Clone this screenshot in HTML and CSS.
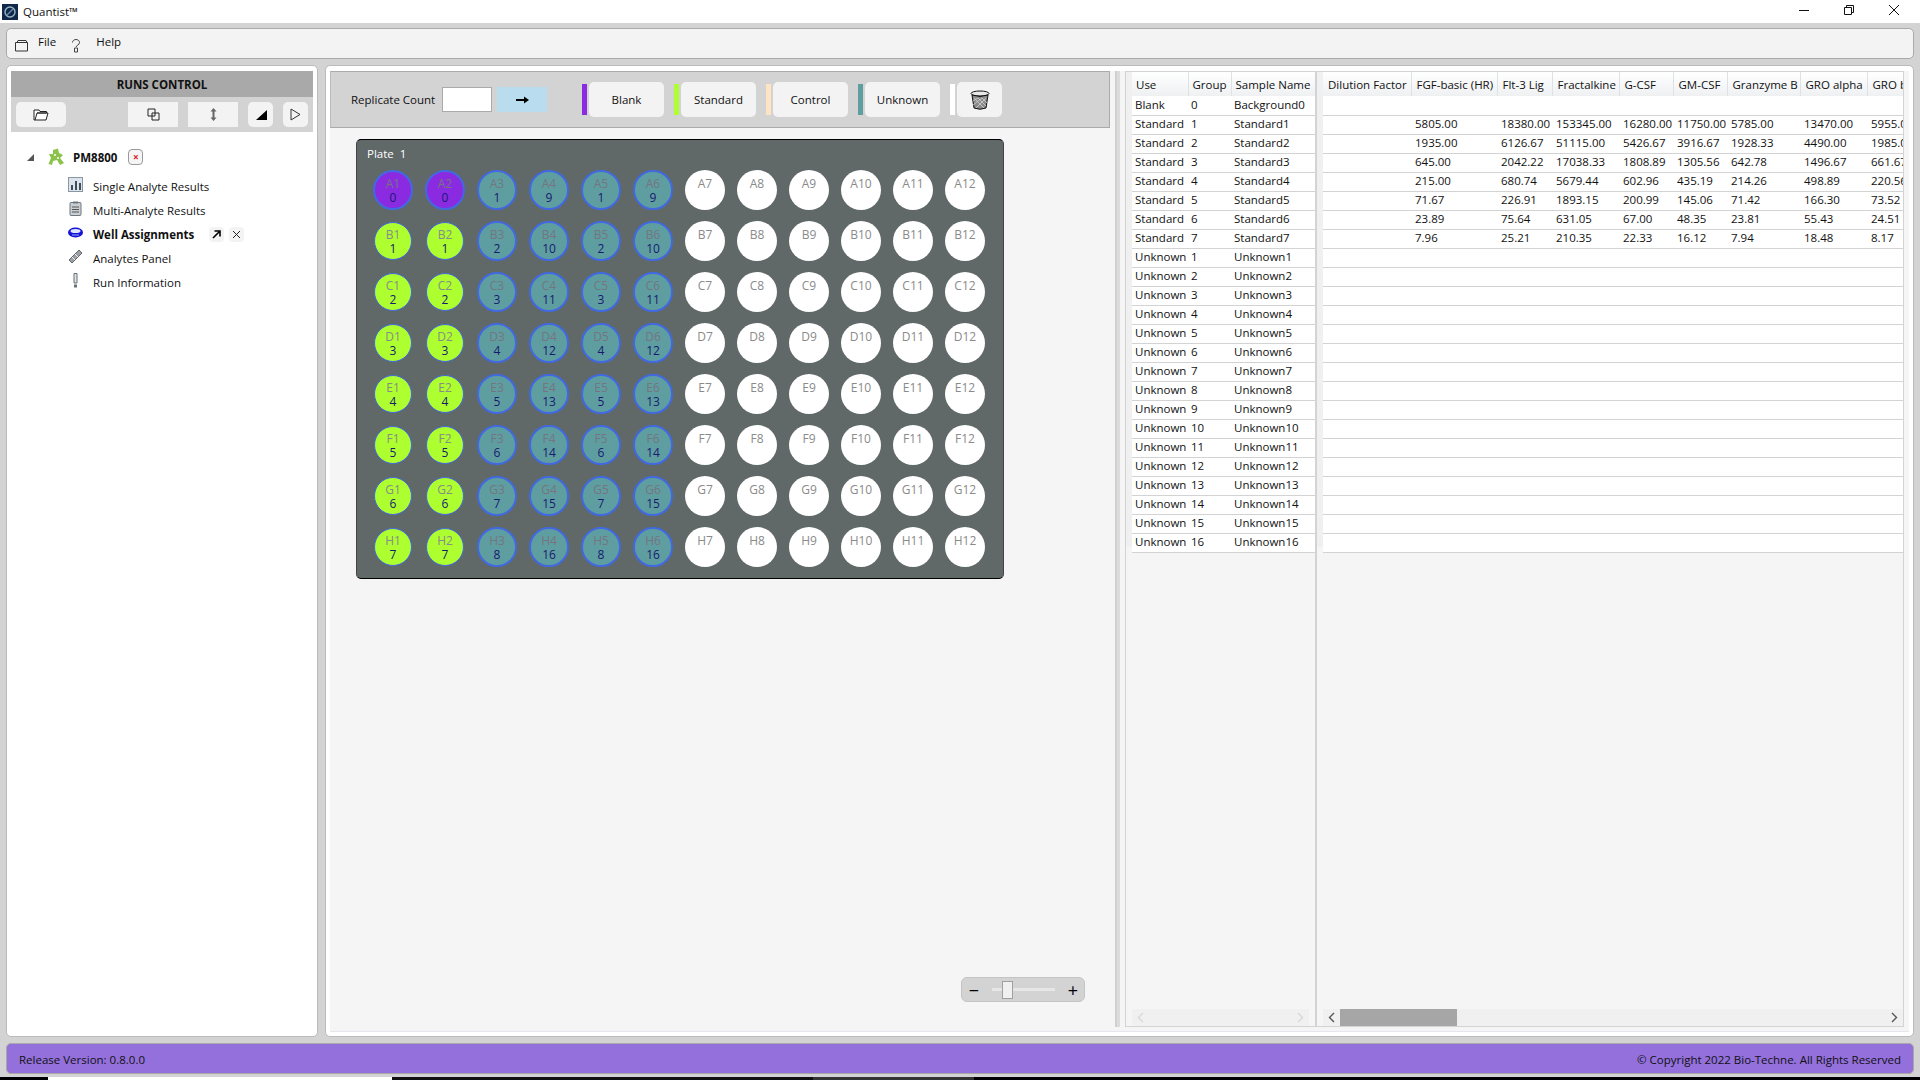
FILE: index.html
```html
<!DOCTYPE html>
<html lang="en">
<head>
    <meta charset="UTF-8">
    <title>Quantist</title>
    <link rel="stylesheet" href="styles.css">
</head>
<body>
    <!-- Title bar -->
    <div class="titlebar">
        <svg class="app-logo" width="16" height="16" viewBox="0 0 16 16">
            <rect width="16" height="16" fill="#10294a"/>
            <circle cx="8" cy="8" r="5" fill="none" stroke="#9db4c6" stroke-width="1.4"/>
            <path d="M5 11 L11 5" stroke="#5f8aa8" stroke-width="1.4"/>
        </svg>
        <span class="app-name">Quantist™</span>
        <div class="window-btns">
            <svg width="12" height="12" viewBox="0 0 12 12"><path d="M1 6.5 H11" stroke="#111" fill="none"/></svg>
            <svg width="12" height="12" viewBox="0 0 12 12"><path d="M1.5 3.5 H8.5 V10.5 H1.5 Z M3.5 3.5 V1.5 H10.5 V8.5 H8.5" stroke="#111" fill="none"/></svg>
            <svg width="12" height="12" viewBox="0 0 12 12"><path d="M1 1 L11 11 M11 1 L1 11" stroke="#111" fill="none"/></svg>
        </div>
    </div>

    <!-- Menu -->
    <div class="menubar">
        <svg class="menu-icon-file" width="15" height="13" viewBox="0 0 15 13"><path d="M1.5 3.5 H13.5 V12 H1.5 Z M3 3.5 L4 1.5 H12 L13 3.5" fill="#f3f3f3" stroke="#333"/></svg>
        <span class="menu-file">File</span>
        <svg class="menu-icon-help" width="10" height="15" viewBox="0 0 10 15"><path d="M1.5 4.5 C1.5 0.5 8.5 0.5 8.5 4.5 C8.5 7 5.5 7 5 9 M3.5 10 H6.5 V14 H3.5 Z" fill="none" stroke="#444"/></svg>
        <span class="menu-help">Help</span>
    </div>

    <div class="main">
        <!-- Left panel -->
        <div class="runs">
            <div class="runs-title">RUNS CONTROL</div>
            <div class="runs-tools">
                <button class="tool tool-wide">
                    <svg width="16" height="12" viewBox="0 0 16 12"><path d="M1 1 H6 L7 2.5 H13.5 V4 H4 L2 11 H1 Z M4 4 H15 L13 11 H2" fill="#fff" stroke="#222"/></svg>
                </button>
                <button class="tool tool-square tool-copy">
                    <svg width="13" height="13" viewBox="0 0 13 13"><path d="M1 1 H8 V8 H1 Z M5 5 H12 V12 H5 Z" fill="none" stroke="#222"/></svg>
                </button>
                <button class="tool tool-square">
                    <svg width="7" height="13" viewBox="0 0 7 13"><path d="M3.5 0 L6.5 3.5 H4.5 V9.5 H6.5 L3.5 13 L0.5 9.5 H2.5 V3.5 H0.5 Z" fill="#666"/></svg>
                </button>
                <button class="tool tool-small">
                    <svg width="12" height="12" viewBox="0 0 12 12"><path d="M12 1 V11 H1 Z" fill="#000"/></svg>
                </button>
                <button class="tool tool-small">
                    <svg width="11" height="13" viewBox="0 0 11 13"><path d="M1 1 L10 6.5 L1 12 Z" fill="none" stroke="#333"/></svg>
                </button>
            </div>
            <div class="tree">
                <div class="tree-root">
                    <svg class="tree-arrow" width="7" height="7" viewBox="0 0 7 7"><path d="M7 0 V7 H0 Z" fill="#555"/></svg>
                    <svg class="tree-root-icon" width="17" height="18" viewBox="0 0 17 18">
                        <path d="M5 2 L10 0.5 L11 5 L15 7 L12 10 L16 15 L12 17 L9 12 L5 13 L4 17 L0.5 16 L3 10 L1 6 L5 6 Z" fill="#8bc34a"/>
                        <circle cx="7" cy="7" r="1" fill="#fff"/><circle cx="10" cy="10" r="1" fill="#fff"/>
                    </svg>
                    <span class="tree-root-name">PM8800</span>
                    <span class="close-red">×</span>
                </div>
                <div class="tree-item">
                    <svg width="15" height="15" viewBox="0 0 15 15"><rect x="0.5" y="0.5" width="14" height="14" fill="#dbe4ec" stroke="#8a97a3"/><path d="M3 13 V8 H5 V13 Z M7 13 V4 H9 V13 Z M11 13 V6 H13 V13 Z" fill="#3d4d5c"/></svg>
                    <span>Single Analyte Results</span>
                </div>
                <div class="tree-item">
                    <svg width="15" height="15" viewBox="0 0 15 15"><rect x="2" y="1.5" width="11" height="13" rx="1" fill="#c9ced3" stroke="#6f7880"/><rect x="5" y="0.5" width="5" height="2" fill="#6f7880"/><path d="M4 6 H11 M4 8.5 H11 M4 11 H11" stroke="#555"/></svg>
                    <span>Multi-Analyte Results</span>
                </div>
                <div class="tree-item tree-item-active">
                    <svg width="15" height="11" viewBox="0 0 15 11"><ellipse cx="7.5" cy="5.5" rx="7.5" ry="5" fill="#1414d2"/><ellipse cx="7.5" cy="4" rx="5" ry="2" fill="#dfe6ff"/><path d="M4 8 H11" stroke="#9aa8ff"/></svg>
                    <span>Well Assignments</span>
                    <span class="item-btn item-btn-pop"><svg width="9" height="9" viewBox="0 0 9 9"><path d="M1 8 L7 2 M2.5 1 H8 V6.5" fill="none" stroke="#000" stroke-width="1.6"/></svg></span>
                    <span class="item-btn"><svg width="9" height="9" viewBox="0 0 9 9"><path d="M1 1 L8 8 M8 1 L1 8" stroke="#222" fill="none"/></svg></span>
                </div>
                <div class="tree-item">
                    <svg width="15" height="15" viewBox="0 0 15 15"><path d="M1 11 L11 1 L14 4 L4 14 Z" fill="#9aa0a6" stroke="#666"/><path d="M4 8 L7 11 M7 5 L10 8" stroke="#eee"/></svg>
                    <span>Analytes Panel</span>
                </div>
                <div class="tree-item">
                    <svg width="15" height="15" viewBox="0 0 15 15"><path d="M6 0.5 H9 V10 H6 Z" fill="#dfe3e6" stroke="#66717a"/><rect x="6" y="11.5" width="3" height="3" fill="#66717a"/></svg>
                    <span>Run Information</span>
                </div>
            </div>
        </div>

        <!-- Right panel -->
        <div class="work">
            <div class="work-inner">
                <div class="assign">
                    <div class="assign-tools">
                        <label class="rep-label">Replicate Count</label>
                        <input class="rep-input" type="text">
                        <button class="rep-go">
                            <svg width="13" height="8" viewBox="0 0 13 8"><path d="M0 4 H9" stroke="#000" stroke-width="2"/><path d="M8 0.5 L13 4 L8 7.5 Z" fill="#000"/></svg>
                        </button>
                        <span class="swatch swatch-blank swatch-first"></span><button class="use-btn">Blank</button>
                        <span class="swatch swatch-standard"></span><button class="use-btn">Standard</button>
                        <span class="swatch swatch-control"></span><button class="use-btn">Control</button>
                        <span class="swatch swatch-unknown"></span><button class="use-btn">Unknown</button>
                        <span class="swatch swatch-empty"></span><button class="use-btn use-btn-bin">
                            <svg width="20" height="20" viewBox="0 0 20 20">
                                <ellipse cx="10" cy="3.5" rx="9" ry="2.5" fill="#e8e8e8" stroke="#111"/>
                                <path d="M2 5 L4 18 Q10 20.5 16 18 L18 5 Q10 8 2 5 Z" fill="#8a8a8a" stroke="#111"/>
                                <path d="M4 8 L14 18 M8 8 L16 16 M12 8 L17 13 M16 8 L6 18 M12 8 L3 15 M8 8 L3 11" stroke="#ddd" stroke-width="0.7"/>
                            </svg>
                        </button>
                    </div>

                    <div class="plate">
                        <div class="plate-title">Plate&nbsp; 1</div>
                        <div class="wells">
                            <div class="well well-blank"><span>A1</span><b>0</b></div>
                            <div class="well well-blank"><span>A2</span><b>0</b></div>
                            <div class="well well-unknown"><span>A3</span><b>1</b></div>
                            <div class="well well-unknown"><span>A4</span><b>9</b></div>
                            <div class="well well-unknown"><span>A5</span><b>1</b></div>
                            <div class="well well-unknown"><span>A6</span><b>9</b></div>
                            <div class="well"><span>A7</span></div>
                            <div class="well"><span>A8</span></div>
                            <div class="well"><span>A9</span></div>
                            <div class="well"><span>A10</span></div>
                            <div class="well"><span>A11</span></div>
                            <div class="well"><span>A12</span></div>

                            <div class="well well-standard"><span>B1</span><b>1</b></div>
                            <div class="well well-standard"><span>B2</span><b>1</b></div>
                            <div class="well well-unknown"><span>B3</span><b>2</b></div>
                            <div class="well well-unknown"><span>B4</span><b>10</b></div>
                            <div class="well well-unknown"><span>B5</span><b>2</b></div>
                            <div class="well well-unknown"><span>B6</span><b>10</b></div>
                            <div class="well"><span>B7</span></div>
                            <div class="well"><span>B8</span></div>
                            <div class="well"><span>B9</span></div>
                            <div class="well"><span>B10</span></div>
                            <div class="well"><span>B11</span></div>
                            <div class="well"><span>B12</span></div>

                            <div class="well well-standard"><span>C1</span><b>2</b></div>
                            <div class="well well-standard"><span>C2</span><b>2</b></div>
                            <div class="well well-unknown"><span>C3</span><b>3</b></div>
                            <div class="well well-unknown"><span>C4</span><b>11</b></div>
                            <div class="well well-unknown"><span>C5</span><b>3</b></div>
                            <div class="well well-unknown"><span>C6</span><b>11</b></div>
                            <div class="well"><span>C7</span></div>
                            <div class="well"><span>C8</span></div>
                            <div class="well"><span>C9</span></div>
                            <div class="well"><span>C10</span></div>
                            <div class="well"><span>C11</span></div>
                            <div class="well"><span>C12</span></div>

                            <div class="well well-standard"><span>D1</span><b>3</b></div>
                            <div class="well well-standard"><span>D2</span><b>3</b></div>
                            <div class="well well-unknown"><span>D3</span><b>4</b></div>
                            <div class="well well-unknown"><span>D4</span><b>12</b></div>
                            <div class="well well-unknown"><span>D5</span><b>4</b></div>
                            <div class="well well-unknown"><span>D6</span><b>12</b></div>
                            <div class="well"><span>D7</span></div>
                            <div class="well"><span>D8</span></div>
                            <div class="well"><span>D9</span></div>
                            <div class="well"><span>D10</span></div>
                            <div class="well"><span>D11</span></div>
                            <div class="well"><span>D12</span></div>

                            <div class="well well-standard"><span>E1</span><b>4</b></div>
                            <div class="well well-standard"><span>E2</span><b>4</b></div>
                            <div class="well well-unknown"><span>E3</span><b>5</b></div>
                            <div class="well well-unknown"><span>E4</span><b>13</b></div>
                            <div class="well well-unknown"><span>E5</span><b>5</b></div>
                            <div class="well well-unknown"><span>E6</span><b>13</b></div>
                            <div class="well"><span>E7</span></div>
                            <div class="well"><span>E8</span></div>
                            <div class="well"><span>E9</span></div>
                            <div class="well"><span>E10</span></div>
                            <div class="well"><span>E11</span></div>
                            <div class="well"><span>E12</span></div>

                            <div class="well well-standard"><span>F1</span><b>5</b></div>
                            <div class="well well-standard"><span>F2</span><b>5</b></div>
                            <div class="well well-unknown"><span>F3</span><b>6</b></div>
                            <div class="well well-unknown"><span>F4</span><b>14</b></div>
                            <div class="well well-unknown"><span>F5</span><b>6</b></div>
                            <div class="well well-unknown"><span>F6</span><b>14</b></div>
                            <div class="well"><span>F7</span></div>
                            <div class="well"><span>F8</span></div>
                            <div class="well"><span>F9</span></div>
                            <div class="well"><span>F10</span></div>
                            <div class="well"><span>F11</span></div>
                            <div class="well"><span>F12</span></div>

                            <div class="well well-standard"><span>G1</span><b>6</b></div>
                            <div class="well well-standard"><span>G2</span><b>6</b></div>
                            <div class="well well-unknown"><span>G3</span><b>7</b></div>
                            <div class="well well-unknown"><span>G4</span><b>15</b></div>
                            <div class="well well-unknown"><span>G5</span><b>7</b></div>
                            <div class="well well-unknown"><span>G6</span><b>15</b></div>
                            <div class="well"><span>G7</span></div>
                            <div class="well"><span>G8</span></div>
                            <div class="well"><span>G9</span></div>
                            <div class="well"><span>G10</span></div>
                            <div class="well"><span>G11</span></div>
                            <div class="well"><span>G12</span></div>

                            <div class="well well-standard"><span>H1</span><b>7</b></div>
                            <div class="well well-standard"><span>H2</span><b>7</b></div>
                            <div class="well well-unknown"><span>H3</span><b>8</b></div>
                            <div class="well well-unknown"><span>H4</span><b>16</b></div>
                            <div class="well well-unknown"><span>H5</span><b>8</b></div>
                            <div class="well well-unknown"><span>H6</span><b>16</b></div>
                            <div class="well"><span>H7</span></div>
                            <div class="well"><span>H8</span></div>
                            <div class="well"><span>H9</span></div>
                            <div class="well"><span>H10</span></div>
                            <div class="well"><span>H11</span></div>
                            <div class="well"><span>H12</span></div>
                        </div>
                    </div>

                    <div class="zoom-slider">
                        <span class="zoom-sign">−</span>
                        <span class="zoom-track"><span class="zoom-thumb"></span></span>
                        <span class="zoom-sign">+</span>
                    </div>
                </div>

                <div class="splitter"></div>

                <!-- Sample tables -->
                <div class="tables">
                    <div class="pane pane-left">
                        <div class="pane-body">
                            <table class="grid grid-left">
                                <colgroup><col class="c-use"><col class="c-group"><col class="c-name"></colgroup>
                                <thead><tr><th>Use</th><th>Group</th><th>Sample Name</th></tr></thead>
                                <tbody>
                                    <tr><td>Blank</td><td>0</td><td>Background0</td></tr>
                                    <tr><td>Standard</td><td>1</td><td>Standard1</td></tr>
                                    <tr><td>Standard</td><td>2</td><td>Standard2</td></tr>
                                    <tr><td>Standard</td><td>3</td><td>Standard3</td></tr>
                                    <tr><td>Standard</td><td>4</td><td>Standard4</td></tr>
                                    <tr><td>Standard</td><td>5</td><td>Standard5</td></tr>
                                    <tr><td>Standard</td><td>6</td><td>Standard6</td></tr>
                                    <tr><td>Standard</td><td>7</td><td>Standard7</td></tr>
                                    <tr><td>Unknown</td><td>1</td><td>Unknown1</td></tr>
                                    <tr><td>Unknown</td><td>2</td><td>Unknown2</td></tr>
                                    <tr><td>Unknown</td><td>3</td><td>Unknown3</td></tr>
                                    <tr><td>Unknown</td><td>4</td><td>Unknown4</td></tr>
                                    <tr><td>Unknown</td><td>5</td><td>Unknown5</td></tr>
                                    <tr><td>Unknown</td><td>6</td><td>Unknown6</td></tr>
                                    <tr><td>Unknown</td><td>7</td><td>Unknown7</td></tr>
                                    <tr><td>Unknown</td><td>8</td><td>Unknown8</td></tr>
                                    <tr><td>Unknown</td><td>9</td><td>Unknown9</td></tr>
                                    <tr><td>Unknown</td><td>10</td><td>Unknown10</td></tr>
                                    <tr><td>Unknown</td><td>11</td><td>Unknown11</td></tr>
                                    <tr><td>Unknown</td><td>12</td><td>Unknown12</td></tr>
                                    <tr><td>Unknown</td><td>13</td><td>Unknown13</td></tr>
                                    <tr><td>Unknown</td><td>14</td><td>Unknown14</td></tr>
                                    <tr><td>Unknown</td><td>15</td><td>Unknown15</td></tr>
                                    <tr><td>Unknown</td><td>16</td><td>Unknown16</td></tr>
                                </tbody>
                            </table>
                        </div>
                        <div class="hscroll hscroll-off">
                            <svg width="7" height="11" viewBox="0 0 7 11"><path d="M6 1 L1.5 5.5 L6 10" fill="none" stroke="#d8d8d8" stroke-width="1.4"/></svg>
                            <svg width="7" height="11" viewBox="0 0 7 11"><path d="M1 1 L5.5 5.5 L1 10" fill="none" stroke="#d8d8d8" stroke-width="1.4"/></svg>
                        </div>
                    </div>

                    <div class="pane pane-right">
                        <div class="pane-body">
                            <table class="grid grid-right">
                                <colgroup><col class="c-dil"><col class="c-fgf"><col class="c-flt"><col class="c-fra"><col class="c-g"><col class="c-gm"><col class="c-gra"><col class="c-gro"><col class="c-grob"></colgroup>
                                <thead><tr><th>Dilution Factor</th><th>FGF-basic (HR)</th><th>Flt-3 Lig</th><th>Fractalkine</th><th>G-CSF</th><th>GM-CSF</th><th>Granzyme B</th><th>GRO alpha</th><th>GRO beta</th></tr></thead>
                                <tbody>
                                    <tr><td colspan="9"></td></tr>
                                    <tr><td></td><td>5805.00</td><td>18380.00</td><td>153345.00</td><td>16280.00</td><td>11750.00</td><td>5785.00</td><td>13470.00</td><td>5955.00</td></tr>
                                    <tr><td></td><td>1935.00</td><td>6126.67</td><td>51115.00</td><td>5426.67</td><td>3916.67</td><td>1928.33</td><td>4490.00</td><td>1985.00</td></tr>
                                    <tr><td></td><td>645.00</td><td>2042.22</td><td>17038.33</td><td>1808.89</td><td>1305.56</td><td>642.78</td><td>1496.67</td><td>661.67</td></tr>
                                    <tr><td></td><td>215.00</td><td>680.74</td><td>5679.44</td><td>602.96</td><td>435.19</td><td>214.26</td><td>498.89</td><td>220.56</td></tr>
                                    <tr><td></td><td>71.67</td><td>226.91</td><td>1893.15</td><td>200.99</td><td>145.06</td><td>71.42</td><td>166.30</td><td>73.52</td></tr>
                                    <tr><td></td><td>23.89</td><td>75.64</td><td>631.05</td><td>67.00</td><td>48.35</td><td>23.81</td><td>55.43</td><td>24.51</td></tr>
                                    <tr><td></td><td>7.96</td><td>25.21</td><td>210.35</td><td>22.33</td><td>16.12</td><td>7.94</td><td>18.48</td><td>8.17</td></tr>
                                    <tr><td colspan="9"></td></tr>
                                    <tr><td colspan="9"></td></tr>
                                    <tr><td colspan="9"></td></tr>
                                    <tr><td colspan="9"></td></tr>
                                    <tr><td colspan="9"></td></tr>
                                    <tr><td colspan="9"></td></tr>
                                    <tr><td colspan="9"></td></tr>
                                    <tr><td colspan="9"></td></tr>
                                    <tr><td colspan="9"></td></tr>
                                    <tr><td colspan="9"></td></tr>
                                    <tr><td colspan="9"></td></tr>
                                    <tr><td colspan="9"></td></tr>
                                    <tr><td colspan="9"></td></tr>
                                    <tr><td colspan="9"></td></tr>
                                    <tr><td colspan="9"></td></tr>
                                    <tr><td colspan="9"></td></tr>
                                </tbody>
                            </table>
                        </div>
                        <div class="hscroll hscroll-on">
                            <svg width="7" height="11" viewBox="0 0 7 11"><path d="M6 1 L1.5 5.5 L6 10" fill="none" stroke="#555" stroke-width="1.4"/></svg>
                            <span class="hscroll-thumb"></span>
                            <svg class="hscroll-end" width="7" height="11" viewBox="0 0 7 11"><path d="M1 1 L5.5 5.5 L1 10" fill="none" stroke="#555" stroke-width="1.4"/></svg>
                        </div>
                    </div>
                </div>
            </div>
        </div>
    </div>

    <div class="statusbar">
        <span>Release Version: 0.8.0.0</span>
        <span>© Copyright 2022 Bio-Techne. All Rights Reserved</span>
    </div>

    <div class="taskstrip"><span class="strip-start"></span><span class="strip-white"></span><span class="strip-black"></span><span class="strip-gray"></span></div>
</body>
</html>
```

FILE: styles.css
```css
* {
    box-sizing: border-box;
}

html, body {
    height: 100%;
}

body {
    margin: 0;
    height: 1080px;
    overflow: hidden;
    display: flex;
    flex-direction: column;
    background-color: #d3d3d3;
    font-family: "Open Sans", "Noto Sans", sans-serif;
    font-size: 11.5px;
    color: #111;
}

button {
    font: inherit;
    color: inherit;
    border: none;
    padding: 0;
    display: flex;
    align-items: center;
    justify-content: center;
}

/* Title bar */
.titlebar {
    height: 23px;
    flex: none;
    display: flex;
    align-items: center;
    background-color: #ffffff;
    padding-left: 2px;
}

.app-name {
    margin-left: 5px;
}

.window-btns {
    margin: -3px 0 0 auto;
    display: flex;
    gap: 33px;
    padding-right: 20px;
}

/* Menu */
.menubar {
    flex: none;
    height: 31px;
    margin: 5px 6px 6px;
    display: flex;
    align-items: center;
    background-color: #f3f3f3;
    border: 1px solid #aaaaaa;
    border-radius: 5px;
}

.menu-icon-file {
    margin: 4px 0 0 7px;
}

.menu-file {
    margin: -5px 0 0 9px;
}

.menu-icon-help {
    margin: 4px 0 0 15px;
}

.menu-help {
    margin: -5px 0 0 15px;
}

/* Panels */
.main {
    flex: none;
    height: 972px;
    margin: 0 6px 0;
    display: flex;
    gap: 7px;
}

.runs {
    width: 312px;
    flex: none;
    background-color: #ffffff;
    border: 1px solid #bbbbbb;
    border-radius: 5px;
    padding: 5px 4px 4px;
}

.runs-title {
    height: 26px;
    display: flex;
    align-items: center;
    justify-content: center;
    background-color: #a9a9a9;
    font-weight: 700;
}

.runs-tools {
    height: 35px;
    display: flex;
    align-items: center;
    background-color: #d3d3d3;
    padding-left: 5px;
}

.tool {
    height: 25px;
    flex: none;
    background-color: #f3f3f3;
}

.tool-wide {
    width: 50px;
    border-radius: 5px;
    margin-right: 62px;
}

.tool-square {
    width: 50px;
    margin-right: 10px;
}

.tool-small {
    width: 25px;
    border-radius: 5px;
    margin-right: 10px;
}

.tree {
    padding-top: 16px;
}

.tree-root {
    height: 18px;
    display: flex;
    align-items: center;
    margin-bottom: 8px;
    padding-left: 16px;
}

.tree-root-icon {
    margin-left: 14px;
}

.tree-root-name {
    margin-left: 8px;
    font-weight: 700;
}

.close-red {
    width: 15px;
    height: 16px;
    margin-left: 11px;
    display: flex;
    align-items: center;
    justify-content: center;
    border: 1px solid #999999;
    border-radius: 4px;
    background-color: #f5f5f5;
    color: #e02020;
    font-weight: 700;
    font-size: 10px;
}

.tree-item {
    height: 24px;
    display: flex;
    align-items: center;
    padding-left: 57px;
}

.tree-item svg {
    flex: none;
}

.tree-item > svg {
    margin-top: -3px;
}

.tree-item > span:first-of-type {
    margin-left: 10px;
}

.tree-item-active {
    font-weight: 700;
}

.item-btn {
    width: 15px;
    height: 15px;
    margin-left: 5px;
    display: flex;
    align-items: center;
    justify-content: center;
    background-color: #f3f3f3;
    border-radius: 4px;
}

.item-btn-pop {
    margin-left: 15px;
}

.work {
    flex: 1;
    background-color: #ffffff;
    border: 1px solid #bbbbbb;
    border-radius: 5px;
    padding: 5px 4px 4px;
    min-width: 0;
}

.work-inner {
    height: 100%;
    display: flex;
    background-color: #f5f5f5;
    border-bottom: 1px solid #e6e6ee;
    padding-bottom: 4px;
}

/* Well assignment side */
.assign {
    width: 780px;
    flex: none;
    display: flex;
    flex-direction: column;
}

.assign-tools {
    height: 57px;
    flex: none;
    display: flex;
    align-items: center;
    background-color: #d3d3d3;
    border: 1px solid #aaaaaa;
    border-left: 1px solid #bbbbbb;
    padding-left: 20px;
}

.rep-label {
    width: 91px;
    white-space: nowrap;
}

.rep-input {
    width: 50px;
    height: 25px;
    background-color: #ffffff;
    border: 1px solid #aaaaaa;
}

.rep-go {
    width: 50px;
    height: 25px;
    margin-left: 5px;
    background-color: #b9dcee;
}

.swatch {
    width: 5px;
    height: 31px;
    margin-left: 10px;
}

.swatch-first {
    margin-left: 35px;
}

.swatch-blank {
    background-color: #8a2be2;
}

.swatch-standard {
    background-color: #adff2f;
}

.swatch-control {
    background-color: #ffe4c4;
}

.swatch-unknown {
    background-color: #5f9ea0;
}

.swatch-empty {
    background-color: #ffffff;
}

.use-btn {
    width: 75px;
    height: 35px;
    margin-left: 2px;
    background-color: #f3f3f3;
    border-radius: 5px;
}

.use-btn-bin {
    width: 45px;
}

.plate {
    width: 648px;
    height: 440px;
    flex: none;
    margin: 11px 0 0 26px;
    background-color: #606868;
    border-top: 1px solid #000000;
    border-left: 1px solid #444444;
    border-right: 1px solid #444444;
    border-bottom: 1px solid #000000;
    border-radius: 5px;
    padding: 5px 0 0 16px;
}

.plate-title {
    height: 25px;
    color: #ffffff;
    line-height: 17px;
    margin-left: -6px;
}

.wells {
    display: grid;
    grid-template-columns: repeat(12, 40px);
    grid-auto-rows: 40px;
    column-gap: 12px;
    row-gap: 11px;
}

.well {
    width: 40px;
    height: 40px;
    border-radius: 50%;
    background-color: #ffffff;
    display: flex;
    flex-direction: column;
    align-items: center;
    padding-top: 7px;
    font-size: 12px;
    line-height: 14px;
    color: #8a8a8a;
}

.well b {
    font-weight: 400;
    color: #191970;
}

.well-blank,
.well-unknown {
    border: 2px solid #4169e1;
    padding-top: 5px;
    color: #757580;
}

.well-blank {
    background-color: #8a2be2;
}

.well-unknown {
    background-color: #5f9ea0;
}

.well-standard {
    width: 38px;
    height: 38px;
    margin: 1px;
    border: 1px solid #4169e1;
    padding-top: 5px;
    background-color: #adff2f;
}

.zoom-slider {
    width: 124px;
    height: 25px;
    margin: auto 0 25px 631px;
    flex: none;
    display: flex;
    align-items: center;
    justify-content: space-between;
    padding: 0 4px 0 5px;
    background-color: #d3d3d3;
    border: 1px solid #c4c4c4;
    border-radius: 6px;
}

.zoom-sign {
    font-size: 18px;
    line-height: 20px;
    width: 14px;
    text-align: center;
    color: #000000;
}

.zoom-track {
    width: 63px;
    height: 3px;
    background-color: #e6e6e6;
    display: flex;
    align-items: center;
    padding-left: 10px;
}

.zoom-thumb {
    width: 11px;
    height: 18px;
    background-color: #f0f0f0;
    border: 1px solid #a0a0a0;
}

.splitter {
    width: 5px;
    margin-left: 5px;
    flex: none;
    background-color: #dcdcdc;
    border-left: 2px solid #d0d0d0;
}

/* Tables */
.tables {
    width: 779px;
    margin-left: 5px;
    flex: none;
    display: flex;
    border: 1px solid #d3d3d3;
}

.pane {
    display: flex;
    flex-direction: column;
    min-width: 0;
}

.pane-left {
    width: 191px;
    flex: none;
    border-right: 2px solid #d3d3d3;
}

.pane-right {
    flex: 1;
}

.pane-body {
    flex: 1;
    overflow: hidden;
    padding-left: 6px;
    background-image: linear-gradient(#f0f0f0, #f0f0f0);
    background-repeat: no-repeat;
    background-size: 6px 475px;
}

.grid {
    border-collapse: collapse;
    table-layout: fixed;
}

.grid-left {
    width: 183px;
}

.grid-right {
    width: 580px;
}

.c-use { width: 56px; }
.c-group { width: 43px; }
.c-name { width: 84px; }
.c-dil { width: 88px; }
.c-fgf { width: 86px; }
.c-flt { width: 55px; }
.c-fra { width: 67px; }
.c-g { width: 54px; }
.c-gm { width: 54px; }
.c-gra { width: 73px; }
.c-gro { width: 67px; }
.c-grob { width: 36px; }

.grid th {
    height: 24px;
    padding: 0 0 0 4px;
    font-weight: 400;
    text-align: left;
    white-space: nowrap;
    overflow: hidden;
    background-image: linear-gradient(#ffffff, #eef0f2);
    border-right: 1px solid #dfe2e5;
}

.grid-right th {
    padding-left: 5px;
}

.grid td {
    height: 19px;
    padding: 0 0 2px 3px;
    line-height: 15px;
    white-space: nowrap;
    overflow: hidden;
    background-color: #ffffff;
    border-bottom: 1px solid #d3d3d3;
}

.grid-right td {
    padding-left: 4px;
}

.hscroll {
    height: 17px;
    flex: none;
    display: flex;
    align-items: center;
    background-color: #f0f0f0;
    padding: 0 5px;
}

.hscroll-off {
    justify-content: space-between;
    margin: 0 6px;
}

.hscroll-on {
    margin-left: 6px;
}

.hscroll-thumb {
    width: 117px;
    height: 17px;
    margin-left: 5px;
    background-color: #a6a6a6;
}

.hscroll-end {
    margin-left: auto;
}

/* Bottom */
.statusbar {
    flex: none;
    height: 31px;
    margin: 6px 6px 0;
    display: flex;
    align-items: center;
    justify-content: space-between;
    padding: 1px 12px 0 12px;
    background-color: #9370db;
    border: 1px solid #a8a8a8;
    border-radius: 5px;
}

.taskstrip {
    flex: 1;
    margin-top: 3px;
    display: flex;
    background-color: #000000;
}

.strip-start {
    width: 48px;
}

.strip-white {
    width: 344px;
    background-color: #ffffff;
}

.strip-black {
    width: 421px;
    background-color: #111111;
}

.strip-gray {
    width: 161px;
    background-color: #333333;
}
```
